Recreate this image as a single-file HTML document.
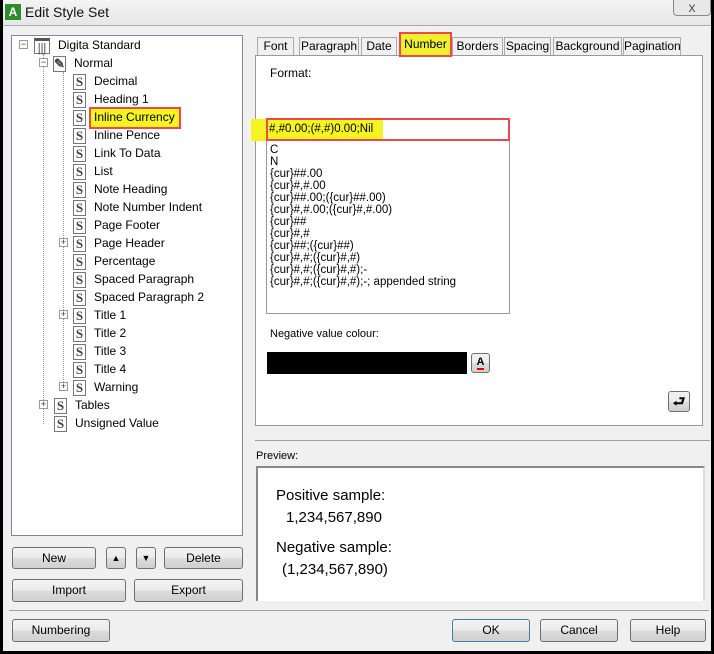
<!DOCTYPE html>
<html><head><style>
*{box-sizing:border-box;margin:0;padding:0}
body{width:714px;height:654px;background:#000;font-family:"Liberation Sans",sans-serif;font-size:12px;color:#000;position:relative;overflow:hidden}
.win{position:absolute;left:3px;top:0;width:708px;height:651px;background:#f0f0f0}
.title{position:absolute;left:0;top:0;width:708px;height:26px;background:linear-gradient(#f4f4f4,#e6e6e6);border-bottom:1px solid #aaa}
.a{position:absolute}
.box{position:absolute;background:#fff;border:1px solid #828790}
.btn{position:absolute;border:1px solid #707070;border-radius:3px;background:linear-gradient(#f2f2f2,#ebebeb 50%,#dcdcdc 51%,#cfcfcf);text-align:center;font-size:12px;line-height:20px}
.tree div{position:absolute;height:18px;line-height:18px;white-space:nowrap}
.s{display:inline-block;width:13px;height:16px;border:1px solid #777;background:#fff;font:bold 13px/14px "Liberation Serif",serif;text-align:center;vertical-align:middle;margin-right:8px;color:#444}
.pm{position:absolute;width:9px;height:9px;border:1px solid #999;background:#fff;font-size:9px;line-height:7px;text-align:center;color:#333}
.tab{position:absolute;top:37px;height:18px;border:1px solid #aaa;border-bottom:none;background:#f0f0f0;line-height:17px;text-align:center;font-size:12px}
.li{position:absolute;left:267px;font-size:11.5px;line-height:12px}
</style></head><body>
<div class="win">
<div class="title">
 <div class="a" style="left:2px;top:4px;width:16px;height:16px;background:#2e8b2e;color:#fff;font-weight:bold;font-size:12px;line-height:16px;text-align:center">A</div>
 <div class="a" style="left:22px;top:4px;font-size:14px;color:#111">Edit Style Set</div>
 <div class="a" style="left:670px;top:-2px;width:38px;height:18px;border:1px solid #888;border-radius:0 0 4px 4px;background:#e8e8e8;text-align:center;color:#555;font-size:14px">x</div>
</div>
<div class="box" style="left:8px;top:35px;width:232px;height:501px"></div>
<div class="a" style="left:40px;top:54px;width:0;height:370px;border-left:1px dotted #999"></div>
<div class="a" style="left:60px;top:72px;width:0;height:316px;border-left:1px dotted #999"></div>
<div class="pm" style="left:16px;top:40px">−</div>
<div class="pm" style="left:36px;top:58px">−</div>
<div class="pm" style="left:56px;top:238px">+</div>
<div class="pm" style="left:56px;top:310px">+</div>
<div class="pm" style="left:56px;top:382px">+</div>
<div class="pm" style="left:36px;top:400px">+</div>
<div class="tree" style="position:absolute;left:0;top:0">
<div style="left:31px;top:36px"><span class="s" style="width:16px;border-top:3px solid #555">|||</span>Digita Standard</div>
<div style="left:50px;top:54px"><span class="s">✎</span>Normal</div>
<div style="left:70px;top:72px"><span class="s">S</span>Decimal</div>
<div style="left:70px;top:90px"><span class="s">S</span>Heading 1</div>
<div style="left:86px;top:107px;width:92px;height:22px;border:2px solid #f04848;background:#f4f420"></div>
<div style="left:70px;top:108px"><span class="s">S</span>Inline Currency</div>
<div style="left:70px;top:126px"><span class="s">S</span>Inline Pence</div>
<div style="left:70px;top:144px"><span class="s">S</span>Link To Data</div>
<div style="left:70px;top:162px"><span class="s">S</span>List</div>
<div style="left:70px;top:180px"><span class="s">S</span>Note Heading</div>
<div style="left:70px;top:198px"><span class="s">S</span>Note Number Indent</div>
<div style="left:70px;top:216px"><span class="s">S</span>Page Footer</div>
<div style="left:70px;top:234px"><span class="s">S</span>Page Header</div>
<div style="left:70px;top:252px"><span class="s">S</span>Percentage</div>
<div style="left:70px;top:270px"><span class="s">S</span>Spaced Paragraph</div>
<div style="left:70px;top:288px"><span class="s">S</span>Spaced Paragraph 2</div>
<div style="left:70px;top:306px"><span class="s">S</span>Title 1</div>
<div style="left:70px;top:324px"><span class="s">S</span>Title 2</div>
<div style="left:70px;top:342px"><span class="s">S</span>Title 3</div>
<div style="left:70px;top:360px"><span class="s">S</span>Title 4</div>
<div style="left:70px;top:378px"><span class="s">S</span>Warning</div>
<div style="left:51px;top:396px"><span class="s">S</span>Tables</div>
<div style="left:51px;top:414px"><span class="s">S</span>Unsigned Value</div>
</div>
<div class="tab" style="left:254px;width:37px">Font</div>
<div class="tab" style="left:296px;width:60px">Paragraph</div>
<div class="tab" style="left:358px;width:36px">Date</div>
<div class="tab" style="left:449px;width:51px">Borders</div>
<div class="tab" style="left:501px;width:47px">Spacing</div>
<div class="tab" style="left:550px;width:69px">Background</div>
<div class="tab" style="left:620px;width:58px">Pagination</div>
<div class="box" style="left:252px;top:55px;width:448px;height:371px;border-color:#999"></div>
<div class="a" style="left:396px;top:32px;width:53px;height:25px;border:2px solid #f04848;background:#f0f030;text-align:center;line-height:20px">Number</div>
<div class="a" style="left:267px;top:66px">Format:</div>
<div class="box" style="left:263px;top:139px;width:244px;height:175px;border-color:#999"></div>
<div class="a" style="left:248px;top:119px;width:132px;height:22px;background:#f4f420"></div>
<div class="a" style="left:263px;top:118px;width:244px;height:23px;border:2px solid #f04848"></div>
<div class="a" style="left:266px;top:123px;font-size:11.5px">#,#0.00;(#,#)0.00;Nil</div>
<div class="li" style="top:144px">C</div>
<div class="li" style="top:156px">N</div>
<div class="li" style="top:168px">{cur}##.00</div>
<div class="li" style="top:180px">{cur}#,#.00</div>
<div class="li" style="top:192px">{cur}##.00;({cur}##.00)</div>
<div class="li" style="top:204px">{cur}#,#.00;({cur}#,#.00)</div>
<div class="li" style="top:216px">{cur}##</div>
<div class="li" style="top:228px">{cur}#,#</div>
<div class="li" style="top:240px">{cur}##;({cur}##)</div>
<div class="li" style="top:252px">{cur}#,#;({cur}#,#)</div>
<div class="li" style="top:264px">{cur}#,#;({cur}#,#);-</div>
<div class="li" style="top:276px">{cur}#,#;({cur}#,#);-; appended string</div>
<div class="a" style="left:267px;top:328px;font-size:11px">Negative value colour:</div>
<div class="a" style="left:264px;top:352px;width:200px;height:22px;background:#000"></div>
<div class="btn" style="left:468px;top:353px;width:19px;height:20px;line-height:16px;font-weight:bold;font-size:11px"><span style="border-bottom:2px solid #e00">A</span></div>
<div class="btn" style="left:665px;top:391px;width:22px;height:21px;font-weight:bold;font-size:14px;line-height:18px">⮐</div>
<div class="a" style="left:252px;top:440px;width:455px;height:1px;background:#a0a0a0"></div>
<div class="a" style="left:253px;top:450px;font-size:11px">Preview:</div>
<div class="a" style="left:253px;top:466px;width:449px;height:135px;background:#fff;border:2px solid #888;border-right-color:#ddd;border-bottom:none"></div>
<div class="a" style="left:273px;top:487px;font-size:15px">Positive sample:</div>
<div class="a" style="left:283px;top:509px;font-size:15px">1,234,567,890</div>
<div class="a" style="left:273px;top:539px;font-size:15px">Negative sample:</div>
<div class="a" style="left:279px;top:561px;font-size:15px">(1,234,567,890)</div>
<div class="btn" style="left:9px;top:547px;width:84px;height:22px">New</div>
<div class="btn" style="left:103px;top:547px;width:20px;height:22px;font-size:9px">▲</div>
<div class="btn" style="left:133px;top:547px;width:20px;height:22px;font-size:9px">▼</div>
<div class="btn" style="left:161px;top:547px;width:79px;height:22px">Delete</div>
<div class="btn" style="left:9px;top:579px;width:114px;height:23px">Import</div>
<div class="btn" style="left:131px;top:579px;width:109px;height:23px">Export</div>
<div class="a" style="left:6px;top:610px;width:700px;height:1px;background:#a0a0a0"></div>
<div class="btn" style="left:9px;top:619px;width:98px;height:23px">Numbering</div>
<div class="btn" style="left:449px;top:619px;width:78px;height:23px;border-color:#3c7fb1">OK</div>
<div class="btn" style="left:537px;top:619px;width:78px;height:23px">Cancel</div>
<div class="btn" style="left:627px;top:619px;width:76px;height:23px">Help</div>
</div>
</body></html>
